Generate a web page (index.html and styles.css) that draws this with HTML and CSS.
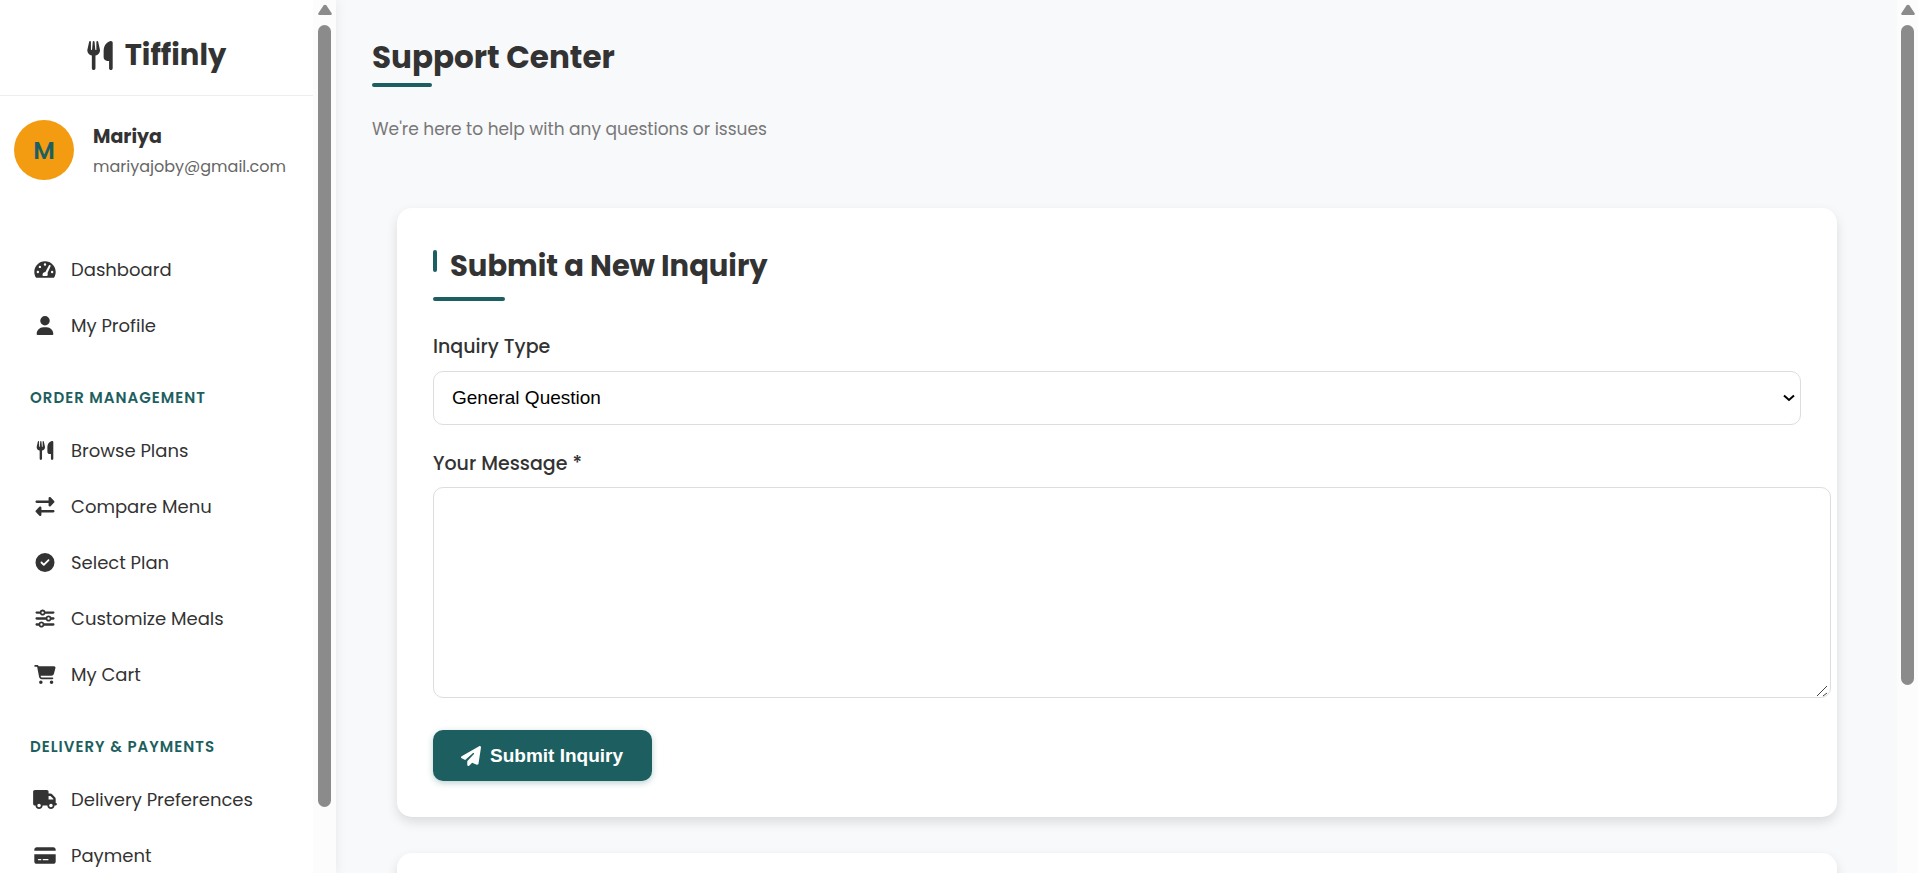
FILE: index.html
```html
<!DOCTYPE html>
<html lang="en">
<head>
<meta charset="utf-8">
<meta name="viewport" content="width=device-width, initial-scale=1">
<title>Support Center - Tiffinly</title>
<link rel="stylesheet" href="styles.css">
</head>
<body>
<svg class="sprite" aria-hidden="true">
  <symbol id="utensils" viewBox="0 0 448 512"><path d="M416 0C400 0 288 32 288 176V288c0 35.3 28.7 64 64 64h32V480c0 17.7 14.3 32 32 32s32-14.3 32-32V352 240 32c0-17.7-14.3-32-32-32zM64 16C64 7.8 57.9 1 49.7 .1S34.2 4.6 32.4 12.5L2.1 148.8C.7 155.1 0 161.5 0 167.9c0 45.9 35.1 83.6 80 87.7V480c0 17.7 14.3 32 32 32s32-14.3 32-32V255.6c44.9-4.1 80-41.8 80-87.7c0-6.4-.7-12.8-2.1-19.1L191.6 12.5c-1.8-8-9.3-13.3-17.4-12.4S160 7.8 160 16V150.2c0 5.4-4.4 9.8-9.8 9.8c-5.1 0-9.3-3.9-9.8-9L127.9 14.6C127.2 6.3 120.3 0 112 0s-15.2 6.3-15.9 14.6L83.7 151c-.5 5.1-4.7 9-9.8 9c-5.4 0-9.8-4.4-9.8-9.8V16z"/></symbol>
  <symbol id="gauge" viewBox="0 0 576 512"><path fill-rule="evenodd" d="M288 32C129 32 0 161 0 320c0 52.800 14.300 102.300 39 144.800 5.600 9.600 16.300 15.200 27.400 15.200h443.200c11.100 0 21.800-5.600 27.400-15.200C561.800 422.300 576 372.800 576 320c0-159-129-288-288-288zM288 90a32 32 0 1 1 0 64 32 32 0 1 1 0-64zM96 290a32 32 0 1 1 0 64 32 32 0 1 1 0-64zM150 154a32 32 0 1 1 0 64 32 32 0 1 1 0-64zM480 290a32 32 0 1 1 0 64 32 32 0 1 1 0-64zM438 166L356 352c10 20 8 64-10 80H232c-22-38-6-106 66-110L392 146c14-24 56-6 46 20z"/></symbol>
  <symbol id="user" viewBox="0 0 448 512"><path d="M224 256A128 128 0 1 0 224 0a128 128 0 1 0 0 256zm-45.7 48C79.8 304 0 383.8 0 482.3C0 498.7 13.3 512 29.7 512H418.3c16.4 0 29.7-13.3 29.7-29.7C448 383.8 368.2 304 269.7 304H178.3z"/></symbol>
  <symbol id="exchange" viewBox="0 0 512 512"><path d="M32 96l320 0V32c0-12.9 7.8-24.6 19.8-29.6s25.7-2.2 34.9 6.9l96 96c6 6 9.400 14.100 9.400 22.600s-3.400 16.600-9.400 22.600l-96 96c-9.200 9.200-22.900 11.900-34.900 6.900s-19.800-16.600-19.800-29.600V160L32 160c-17.700 0-32-14.300-32-32s14.300-32 32-32zM480 352c17.700 0 32 14.300 32 32s-14.300 32-32 32H160v64c0 12.900-7.800 24.600-19.800 29.600s-25.700 2.200-34.900-6.900l-96-96c-6-6-9.400-14.100-9.400-22.600s3.400-16.600 9.400-22.600l96-96c9.200-9.200 22.900-11.900 34.900-6.900s19.800 16.600 19.800 29.600l0 64H480z"/></symbol>
  <symbol id="check" viewBox="0 0 512 512"><path d="M256 512A256 256 0 1 0 256 0a256 256 0 1 0 0 512zM369 209L241 337c-9.400 9.400-24.600 9.400-33.900 0l-64-64c-9.400-9.400-9.400-24.600 0-33.900s24.600-9.400 33.900 0l47 47L335 175c9.400-9.400 24.600-9.400 33.900 0s9.400 24.600 0 33.900z"/></symbol>
  <symbol id="sliders" viewBox="0 0 512 512"><path d="M0 416c0 17.700 14.300 32 32 32l54.700 0c12.300 28.300 40.500 48 73.300 48s61-19.700 73.300-48L480 448c17.700 0 32-14.300 32-32s-14.300-32-32-32l-246.700 0c-12.300-28.300-40.500-48-73.300-48s-61 19.700-73.300 48L32 384c-17.700 0-32 14.300-32 32zm128 0a32 32 0 1 1 64 0 32 32 0 1 1 -64 0zM320 256a32 32 0 1 1 64 0 32 32 0 1 1 -64 0zm32-80c-32.800 0-61 19.700-73.300 48L32 224c-17.700 0-32 14.300-32 32s14.300 32 32 32l246.700 0c12.300 28.300 40.500 48 73.300 48s61-19.700 73.300-48l54.700 0c17.700 0 32-14.300 32-32s-14.300-32-32-32l-54.700 0c-12.300-28.300-40.500-48-73.300-48zM192 128a32 32 0 1 1 0-64 32 32 0 1 1 0 64zm73.300-64C253 35.700 224.800 16 192 16s-61 19.700-73.300 48L32 64C14.300 64 0 78.300 0 96s14.300 32 32 32l86.700 0c12.300 28.300 40.500 48 73.300 48s61-19.700 73.300-48L480 128c17.700 0 32-14.300 32-32s-14.300-32-32-32L265.300 64z"/></symbol>
  <symbol id="cart" viewBox="0 0 576 512"><path d="M0 24C0 10.700 10.700 0 24 0H69.500c22 0 41.500 12.800 50.600 32h411c26.300 0 45.500 25 38.600 50.400l-41 152.300c-8.500 31.400-37 53.300-69.500 53.300H170.700l5.400 28.500c2.200 11.300 12.100 19.500 23.600 19.500H488c13.300 0 24 10.700 24 24s-10.700 24-24 24H199.700c-34.600 0-64.300-24.600-70.700-58.500L77.400 54.500c-.7-3.800-4-6.500-7.900-6.500H24C10.700 48 0 37.300 0 24zM128 464a48 48 0 1 1 96 0 48 48 0 1 1 -96 0zm336-48a48 48 0 1 1 0 96 48 48 0 1 1 0-96z"/></symbol>
  <symbol id="truck" viewBox="0 0 640 512"><path d="M48 0C21.500 0 0 21.500 0 48V368c0 26.500 21.500 48 48 48H64c0 53 43 96 96 96s96-43 96-96H384c0 53 43 96 96 96s96-43 96-96h32c17.700 0 32-14.300 32-32s-14.300-32-32-32V288 256 237.300c0-17-6.700-33.300-18.700-45.300L512 114.700c-12-12-28.300-18.700-45.300-18.700H416V48c0-26.500-21.500-48-48-48H48zM416 160h50.700L544 237.300V256H416V160zM112 416a48 48 0 1 1 96 0 48 48 0 1 1 -96 0zm368-48a48 48 0 1 1 0 96 48 48 0 1 1 0-96z"/></symbol>
  <symbol id="card" viewBox="0 0 576 512"><path d="M64 32C28.700 32 0 60.700 0 96v32H576V96c0-35.300-28.700-64-64-64H64zM576 224H0V416c0 35.300 28.700 64 64 64H512c35.300 0 64-28.700 64-64V224zM112 352h64c8.800 0 16 7.200 16 16s-7.200 16-16 16H112c-8.800 0-16-7.200-16-16s7.200-16 16-16zm112 16c0-8.800 7.200-16 16-16H368c8.800 0 16 7.200 16 16s-7.200 16-16 16H240c-8.800 0-16-7.200-16-16z"/></symbol>
  <symbol id="plane" viewBox="0 0 512 512"><path d="M498.100 5.600c10.100 7 15.400 19.100 13.500 31.200l-64 416c-1.500 9.700-7.400 18.200-16 23s-18.900 5.400-28 1.600L284 427.700l-68.500 74.100c-8.900 9.700-22.900 12.900-35.200 8.100S160 493.200 160 480V396.400c0-4 1.500-7.800 4.200-10.700L331.800 202.800c5.800-6.300 5.600-16-.4-22s-15.700-6.400-22-.7L106 360.800 17.700 316.600C7.100 311.300 .3 300.700 0 288.900s5.900-22.800 16.100-28.700l448-256c10.700-6.100 23.900-5.500 34 1.400z"/></symbol>
  <symbol id="arrow-up" viewBox="0 0 14 12"><path d="M5.500 1.500Q7 0 8.500 1.500L13.500 9Q14.500 11 12.500 11H1.500Q-.5 11 .5 9z"/></symbol>
</svg>
<div class="app">
  <aside class="sidebar">
    <div class="sidebar-body">
      <div class="brand"><svg class="brand-icon"><use href="#utensils"/></svg><span>Tiffinly</span></div>
      <div class="profile">
        <div class="avatar">M</div>
        <div class="profile-text">
          <div class="profile-name">Mariya</div>
          <div class="profile-email">mariyajoby@gmail.com</div>
        </div>
      </div>
      <nav class="menu">
        <a class="menu-item" href="#"><svg class="icon"><use href="#gauge"/></svg>Dashboard</a>
        <a class="menu-item" href="#"><svg class="icon"><use href="#user"/></svg>My Profile</a>
        <h2 class="menu-heading">Order Management</h2>
        <a class="menu-item" href="#"><svg class="icon"><use href="#utensils"/></svg>Browse Plans</a>
        <a class="menu-item" href="#"><svg class="icon"><use href="#exchange"/></svg>Compare Menu</a>
        <a class="menu-item" href="#"><svg class="icon"><use href="#check"/></svg>Select Plan</a>
        <a class="menu-item" href="#"><svg class="icon"><use href="#sliders"/></svg>Customize Meals</a>
        <a class="menu-item" href="#"><svg class="icon"><use href="#cart"/></svg>My Cart</a>
        <h2 class="menu-heading">Delivery &amp; Payments</h2>
        <a class="menu-item" href="#"><svg class="icon"><use href="#truck"/></svg>Delivery Preferences</a>
        <a class="menu-item" href="#"><svg class="icon"><use href="#card"/></svg>Payment</a>
      </nav>
    </div>
    <div class="scrollbar scrollbar-side"><svg class="scroll-arrow"><use href="#arrow-up"/></svg><div class="thumb"></div></div>
  </aside>
  <main class="content">
    <h1 class="page-title">Support Center</h1>
    <p class="subtitle">We're here to help with any questions or issues</p>
    <section class="card">
      <h2 class="card-title">Submit a New Inquiry</h2>
      <form>
        <label class="label" for="type">Inquiry Type</label>
        <div class="select-wrap">
          <select class="control select" id="type"><option>General Question</option></select>
          <svg class="chevron" viewBox="0 0 12 8"><path d="M1 1.500l5 4.500 5-4.500"/></svg>
        </div>
        <label class="label" for="message">Your Message *</label>
        <div class="message-wrap">
          <textarea class="control message" id="message"></textarea>
          <svg class="grip" viewBox="0 0 12 12"><path d="M1 11L11 1M7 11l4-3"/></svg>
        </div>
        <button class="submit" type="button"><svg class="submit-icon"><use href="#plane"/></svg>Submit Inquiry</button>
      </form>
    </section>
    <section class="card card-next"></section>
  </main>
  <div class="scrollbar scrollbar-page"><svg class="scroll-arrow"><use href="#arrow-up"/></svg><div class="thumb"></div></div>
</div>
</body>
</html>
```
FILE: styles.css
```css
* { box-sizing: border-box; }
body { margin: 0; color: #333; background: #f8f9fb; font-family: Poppins, Inter, "Open Sans", sans-serif; font-size: 18px; }
h1, h2, p { margin: 0; }
svg { fill: currentColor; flex: none; }
.sprite { position: absolute; width: 0; height: 0; }
.app { display: flex; height: 100vh; overflow: hidden; }

.sidebar { position: relative; display: flex; flex: none; width: 336px; background: #fff; box-shadow: 2px 0 10px rgba(0, 0, 0, .06); }
.sidebar-body { flex: 1; overflow: hidden; }
.brand { display: flex; align-items: center; justify-content: center; gap: 12px; height: 96px; padding-top: 16px; border-bottom: 1px solid #eee; font-size: 29px; font-weight: 700; }
.brand-icon { width: 26px; height: 29px; }
.profile { display: flex; align-items: center; gap: 19px; height: 108px; padding: 0 14px; }
.profile-text { padding-top: 4px; }
.avatar { display: grid; place-items: center; flex: none; width: 60px; height: 60px; border-radius: 50%; background: #f39c12; color: #1d5f60; font-size: 24px; font-weight: 600; }
.profile-name { line-height: 30px; font-size: 19px; font-weight: 700; }
.profile-email { line-height: 30px; color: #666; font-size: 16px; }
.menu { padding-top: 37px; }
.menu-item { display: flex; align-items: center; gap: 14px; height: 56px; padding-left: 33px; color: #333; text-decoration: none; font-size: 18px; }
.icon { width: 24px; height: 19px; }
.menu-heading { height: 69px; padding: 33px 0 0 30px; line-height: 24px; color: #1d5f60; font-size: 15px; font-weight: 600; letter-spacing: 1px; text-transform: uppercase; }

.scrollbar { display: flex; flex-direction: column; align-items: center; flex: none; gap: 9px; padding-top: 4px; background: #fcfcfc; color: #8b8b8b; }
.scrollbar-side { width: 23px; }
.scrollbar-page { width: 21px; }
.scroll-arrow { width: 14px; height: 12px; }
.thumb { width: 13px; border-radius: 7px; background: #8b8b8b; }
.scrollbar-side .thumb { height: 90%; }
.scrollbar-page .thumb { height: 76%; }

.content { flex: 1; min-width: 0; padding: 35px 36px 0; }
.page-title { line-height: 44px; font-size: 31px; font-weight: 700; }
.page-title::after, .card-title::after { content: ""; display: block; height: 4px; border-radius: 2px; background: #1d5f60; }
.page-title::after { width: 60px; margin-top: 4px; }
.subtitle { margin-top: 28px; line-height: 28px; color: #777; font-size: 17px; }
.card { margin: 65px 24px 0 25px; padding: 36px; border-radius: 15px; background: #fff; box-shadow: 0 5px 12px rgba(0, 0, 0, .12); }
.card-title { position: relative; padding-left: 17px; line-height: 44px; font-size: 29px; font-weight: 700; }
.card-title::before { content: ""; position: absolute; top: 6px; left: 0; width: 4px; height: 22px; border-radius: 2px; background: #1d5f60; }
.card-title::after { width: 72px; margin: 9px 0 0 -17px; }
form { padding-top: 30px; }
.label { display: block; line-height: 32px; font-size: 19px; font-weight: 500; }
.control { display: block; width: 100%; padding: 0 18px 2px; border: 1px solid #ddd; border-radius: 10px; background: #fff; color: #000; font: 19px "Liberation Sans", Arial, sans-serif; }
.select-wrap { position: relative; margin: 8px 0 23px; }
.select { height: 54px; appearance: none; }
.chevron { position: absolute; top: 23px; right: 6px; width: 12px; height: 8px; fill: none; stroke: #000; stroke-width: 2; }
.message-wrap { position: relative; margin: 7px -30px 32px 0; }
.message { height: 211px; resize: none; }
.grip { position: absolute; right: 3px; bottom: 1px; width: 12px; height: 12px; fill: none; stroke: #444; }
.submit { display: flex; align-items: center; gap: 9px; height: 51px; padding: 0 29px 0 28px; border: 0; border-radius: 10px; background: #1d5f60; color: #fff; box-shadow: 0 2px 6px rgba(29, 95, 96, .3); font: 700 19px "Liberation Sans", Arial, sans-serif; }
.submit-icon { width: 20px; height: 20px; }
.card-next { height: 200px; margin-top: 36px; }
```
